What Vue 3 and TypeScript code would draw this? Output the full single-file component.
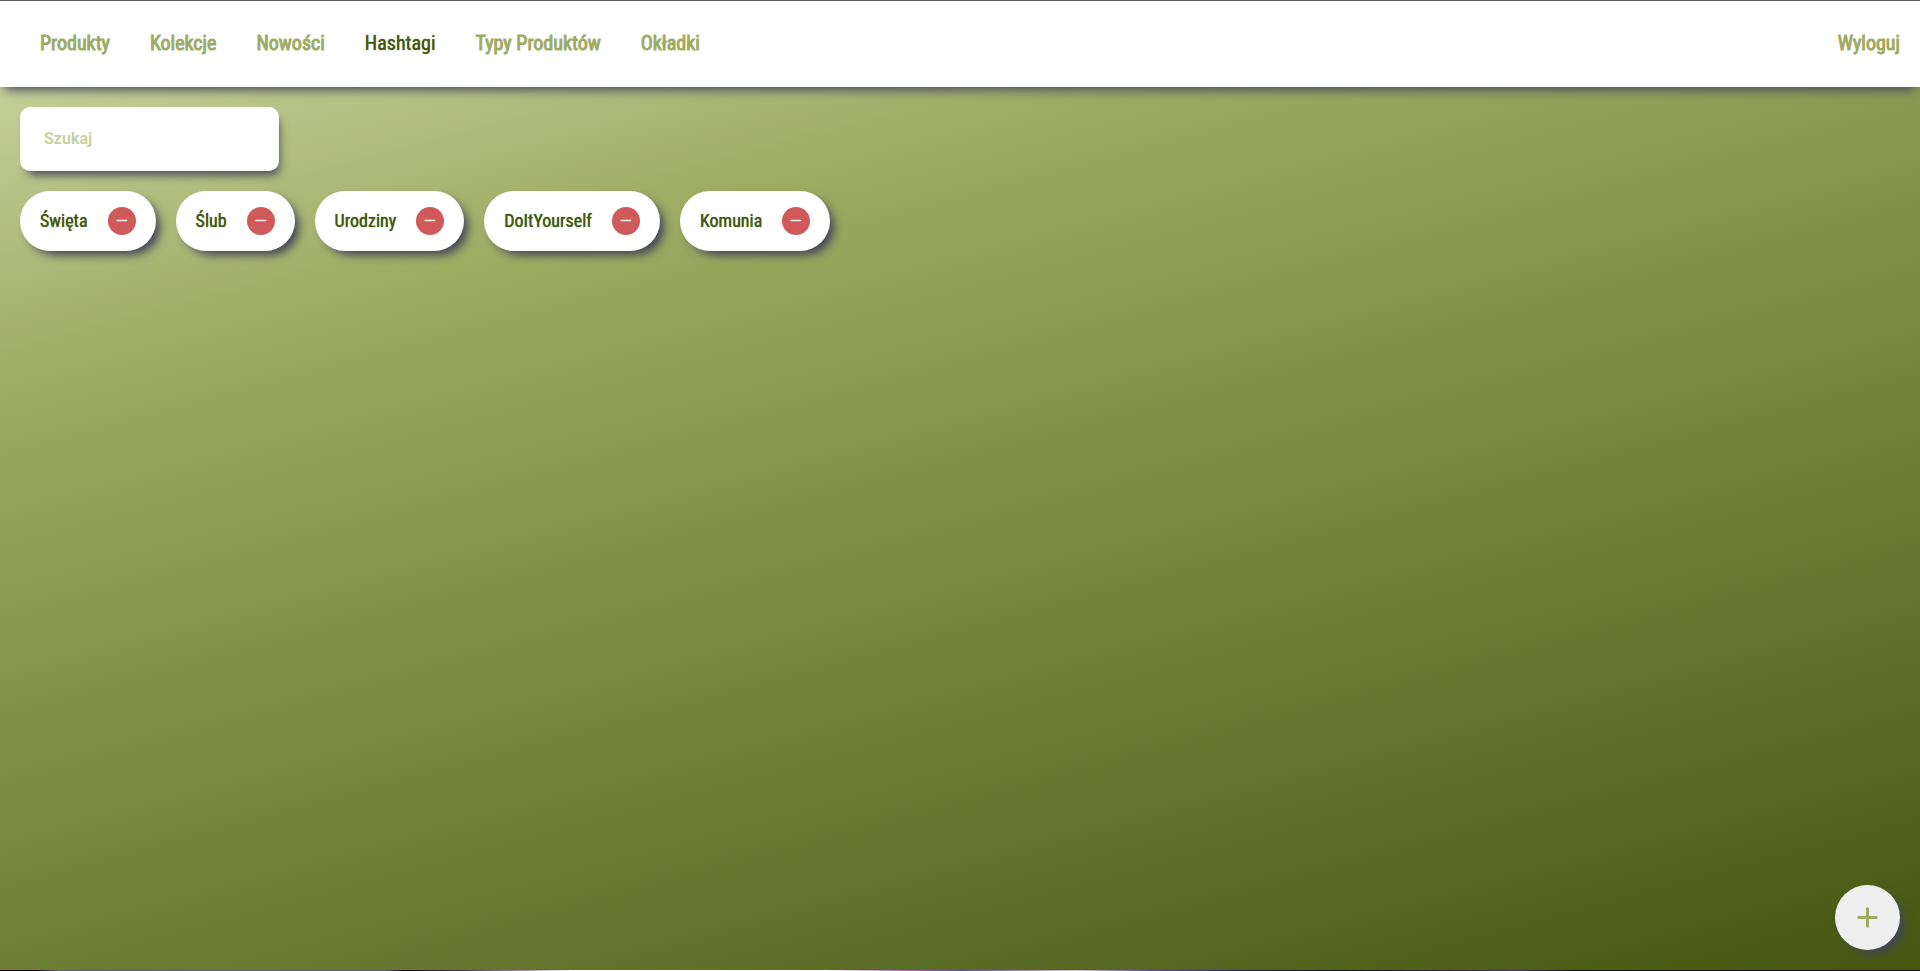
<script setup lang="ts">
import { ref } from 'vue'

interface NavItem {
  label: string
  active?: boolean
}

const navItems: NavItem[] = [
  { label: 'Produkty' },
  { label: 'Kolekcje' },
  { label: 'Nowości' },
  { label: 'Hashtagi', active: true },
  { label: 'Typy Produktów' },
  { label: 'Okładki' },
]

const hashtags = ref<string[]>(['Święta', 'Ślub', 'Urodziny', 'DoItYourself', 'Komunia'])
const search = ref('')

function removeTag(tag: string): void {
  hashtags.value = hashtags.value.filter((t) => t !== tag)
}
</script>

<template>
  <div class="page">
    <header class="topbar">
      <nav class="nav">
        <a
          v-for="item in navItems"
          :key="item.label"
          href="#"
          class="nav-link"
          :class="{ active: item.active }"
          :aria-current="item.active ? 'page' : undefined"
        >{{ item.label }}</a>
      </nav>
      <a href="#" class="nav-link">Wyloguj</a>
    </header>
    <main class="content">
      <input v-model="search" class="search" type="text" placeholder="Szukaj" aria-label="Szukaj" />
      <ul class="tags">
        <li v-for="tag in hashtags" :key="tag" class="tag">
          <span class="tag-name">{{ tag }}</span>
          <button class="remove" type="button" :aria-label="`Usuń ${tag}`" @click="removeTag(tag)">
            <svg width="12" height="12" viewBox="0 0 12 12" aria-hidden="true">
              <path d="M1 5.5H10.6" stroke="#eee" stroke-width="1.5" stroke-linecap="round" />
            </svg>
          </button>
        </li>
      </ul>
    </main>
    <button class="add" type="button" aria-label="Dodaj hashtag">
      <svg width="21" height="21" viewBox="0 0 21 21" aria-hidden="true">
        <path d="M10.5 1.8V19.2M1.8 10.5H19.2" stroke="#9dab62" stroke-width="3" stroke-linecap="round" />
      </svg>
    </button>
    <div class="edge"></div>
  </div>
</template>

<style>
body {
  margin: 0;
}
</style>

<style scoped>
.page {
  box-sizing: border-box;
  display: flex;
  flex-direction: column;
  min-height: 100vh;
  border-top: 1px solid #5f5e66;
  background: linear-gradient(165deg, #d0d9a9 0%, #9eab63 26%, #435711 100%);
  font-family: "Roboto Condensed", Roboto, sans-serif;
  color: #435711;
}

.topbar {
  display: flex;
  justify-content: space-between;
  align-items: center;
  box-sizing: border-box;
  height: 86px;
  padding: 0 20px 2px;
  background: #fff;
  box-shadow: 0 8px 10px -5px #4a4a60;
}

.nav {
  display: flex;
  gap: 40px;
  padding-left: 20px;
}

.nav-link {
  color: #9eab63;
  font-size: 20px;
  line-height: 24px;
  font-weight: 400;
  -webkit-text-stroke: 1px currentColor;
  text-decoration: none;
}

.nav-link.active {
  color: #435711;
  -webkit-text-stroke: 0;
  text-shadow: 0 0 1px currentColor;
}

.content {
  flex: 1;
  display: flex;
  flex-direction: column;
  align-items: flex-start;
  gap: 20px;
  padding: 20px;
}

.search {
  box-sizing: border-box;
  width: 259px;
  height: 64px;
  padding: 0 24px 2px;
  border: none;
  border-radius: 10px;
  background: #fff;
  box-shadow: 4px 8px 10px -4px #4a4a60;
  font-family: Roboto, sans-serif;
  font-size: 16px;
  font-weight: 700;
  color: #435711;
}

.search::placeholder {
  color: #c9d1a4;
  opacity: 1;
}

.tags {
  display: flex;
  flex-wrap: wrap;
  gap: 20px;
  margin: 0;
  padding: 0;
  list-style: none;
}

.tag {
  display: flex;
  align-items: center;
  gap: 20px;
  height: 60px;
  padding: 0 20px;
  border-radius: 30px;
  background: #fff;
  box-shadow: 6px 6px 10px -2px #434358;
}

.tag-name {
  font-size: 18px;
  line-height: 22px;
  font-weight: 400;
  text-shadow: 0 0 1px currentColor;
}

.remove {
  display: flex;
  align-items: center;
  justify-content: center;
  width: 28px;
  height: 28px;
  padding: 0;
  border: none;
  border-radius: 50%;
  background: #d05a5a;
}

.add {
  position: fixed;
  right: 20px;
  bottom: 21px;
  display: flex;
  align-items: center;
  justify-content: center;
  width: 65px;
  height: 65px;
  padding: 0;
  border: none;
  border-radius: 50%;
  background: #eee;
  box-shadow: 6px 6px 10px -2px #434358;
}

.edge {
  height: 1px;
  background: linear-gradient(90deg, #1c0527 0%, #1c0527 2%, #5f5e66 3%, #5f5e66 20%, #1c0527 21%, #4a2a50 24%, #a08a9c 27%, #fff 30%, #fff 43%, #b468d0 47%, #6a4aa0 50%, #d8c0d0 56%, #6240a8 60%, #202048 65%, #111 70%, #4a2a60 79%, #111 82%, #1c0520 100%);
}
</style>
